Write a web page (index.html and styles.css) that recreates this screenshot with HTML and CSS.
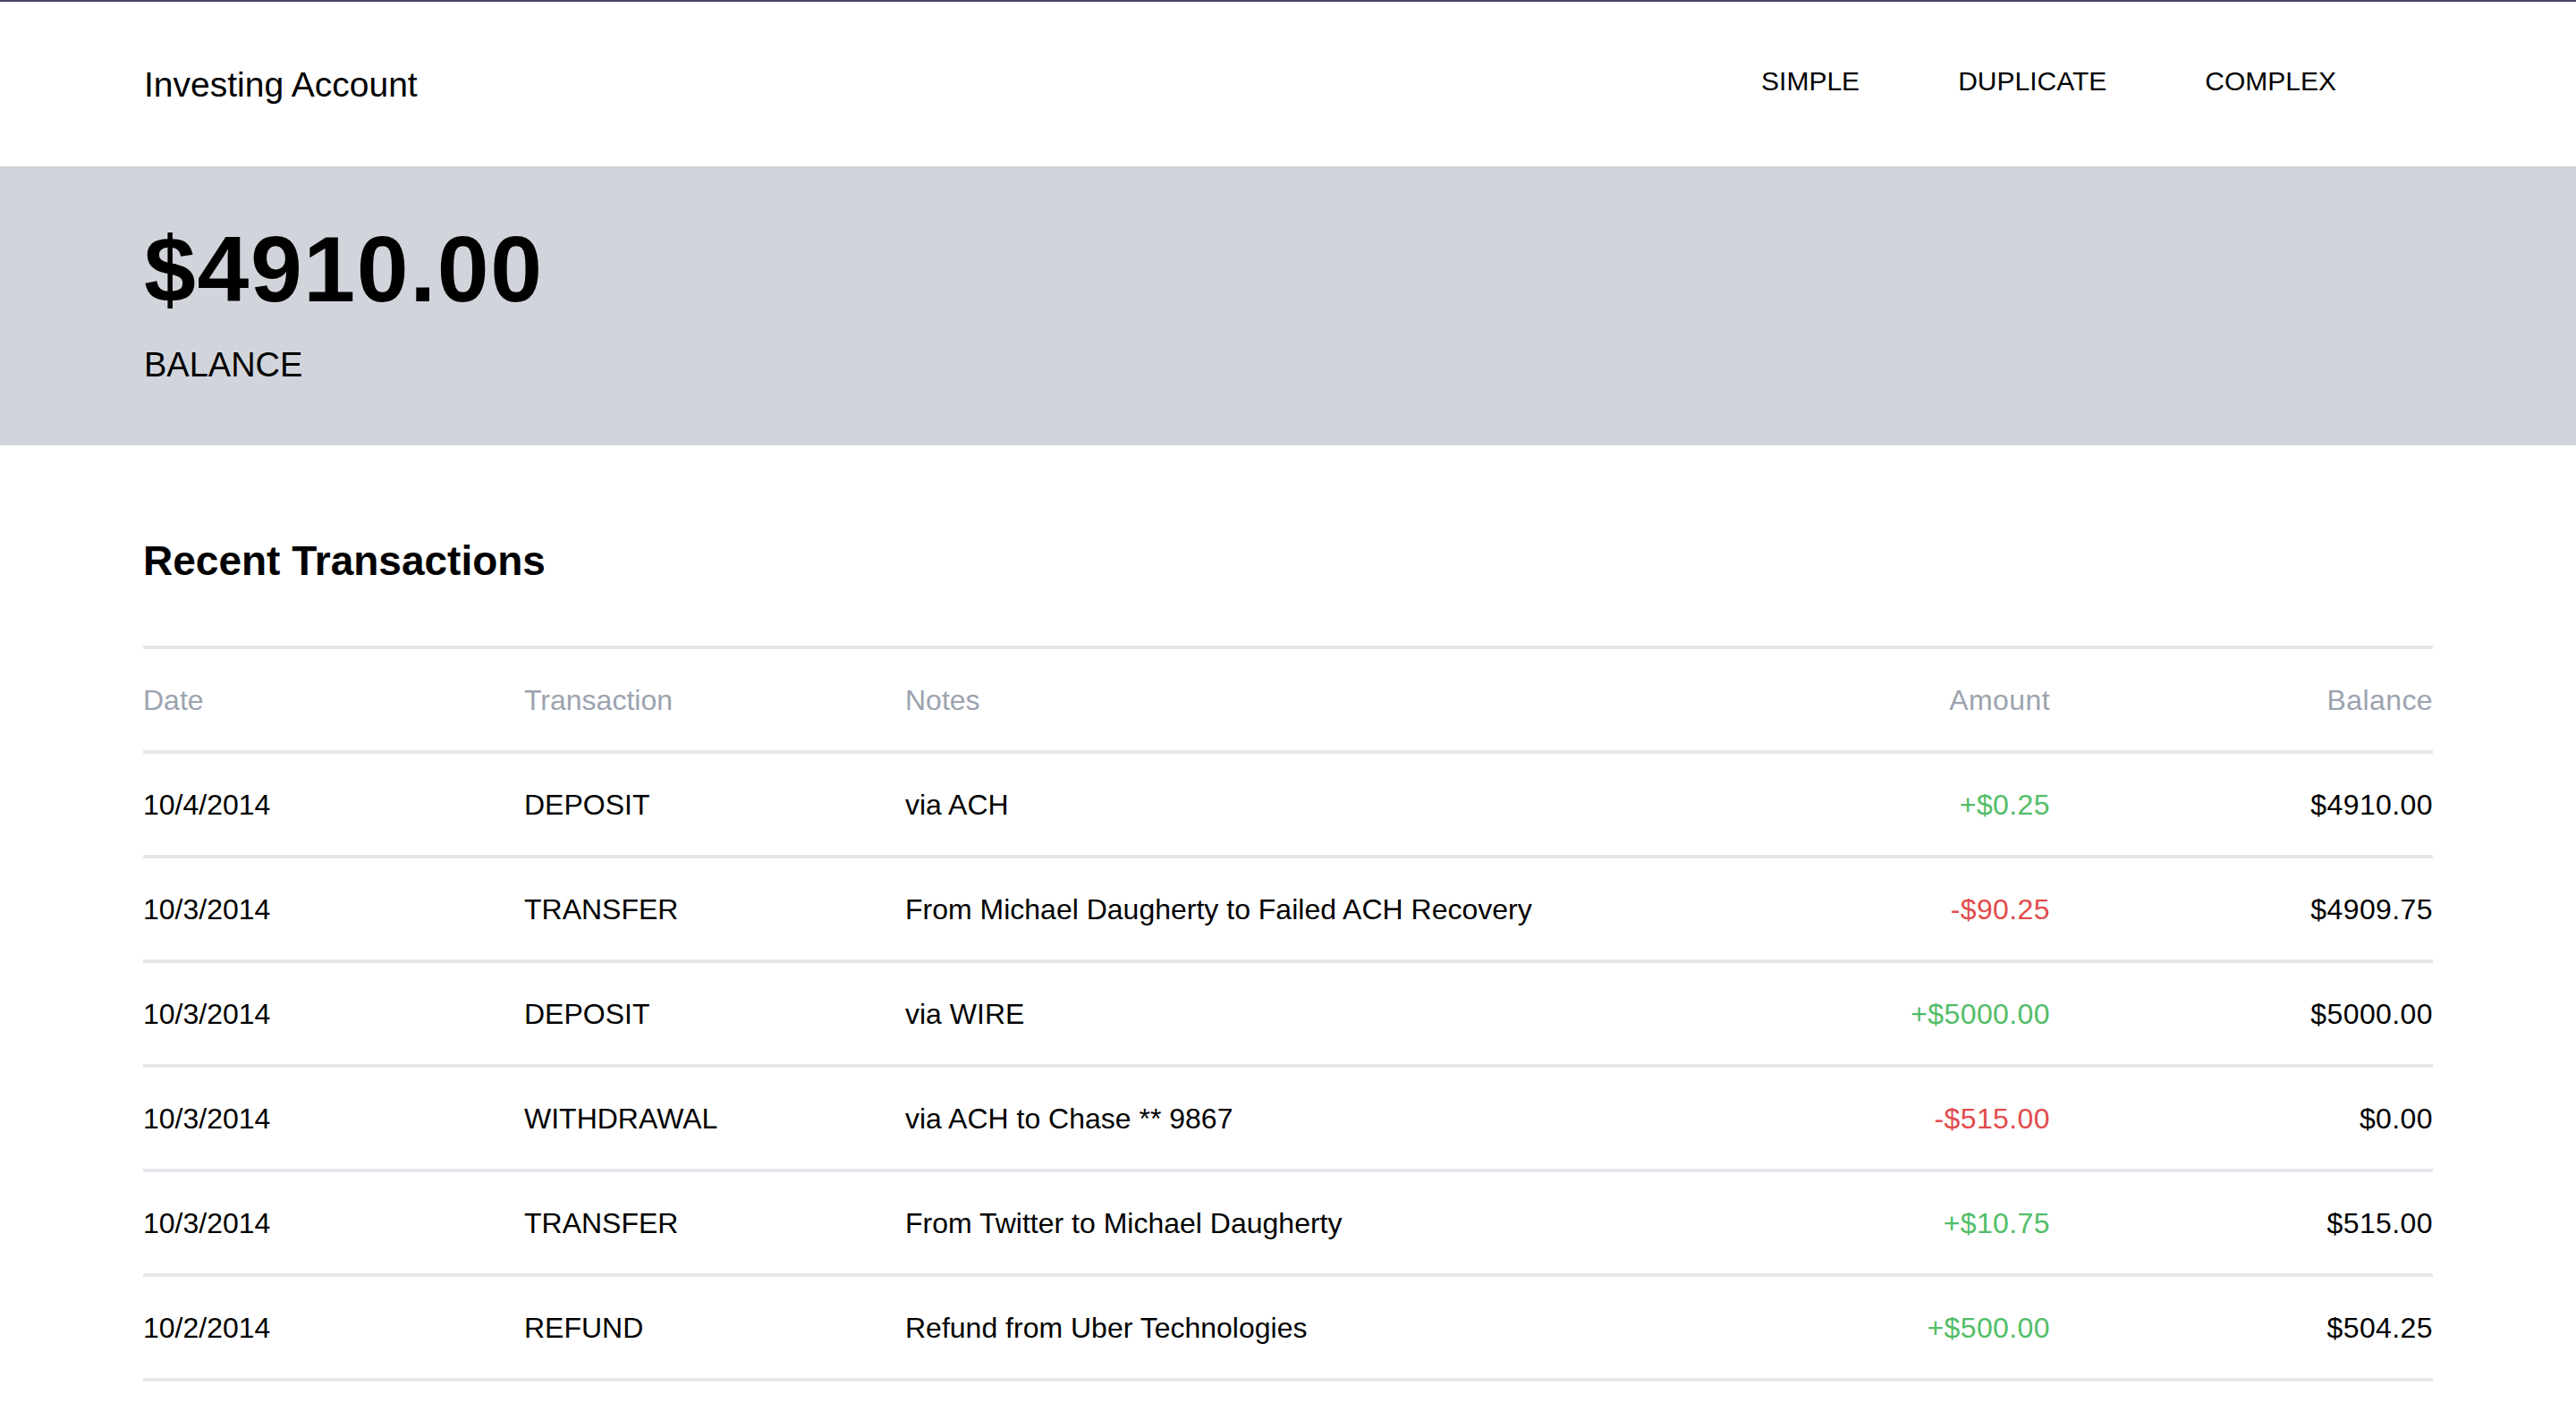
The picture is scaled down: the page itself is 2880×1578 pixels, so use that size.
FILE: index.html
```html
<!DOCTYPE html>
<html lang="en">
<head>
<meta charset="utf-8">
<title>Investing Account</title>
<link rel="stylesheet" href="styles.css">
</head>
<body>
<header class="topbar">
  <div class="brand">Investing Account</div>
  <nav class="nav">
    <a class="nav-link" href="#">SIMPLE</a>
    <a class="nav-link" href="#">DUPLICATE</a>
    <a class="nav-link" href="#">COMPLEX</a>
  </nav>
</header>
<section class="hero">
  <div class="hero-amount">$4910.00</div>
  <div class="hero-label">BALANCE</div>
</section>
<main class="content">
  <h2 class="section-title">Recent Transactions</h2>
  <table class="tx-table">
    <colgroup>
      <col class="c-date"><col class="c-type"><col class="c-notes"><col class="c-amount"><col class="c-balance">
    </colgroup>
    <thead>
      <tr>
        <th>Date</th><th>Transaction</th><th>Notes</th><th class="num">Amount</th><th class="num">Balance</th>
      </tr>
    </thead>
    <tbody>
      <tr><td>10/4/2014</td><td>DEPOSIT</td><td>via ACH</td><td class="num pos">+$0.25</td><td class="num">$4910.00</td></tr>
      <tr><td>10/3/2014</td><td>TRANSFER</td><td>From Michael Daugherty to Failed ACH Recovery</td><td class="num neg">-$90.25</td><td class="num">$4909.75</td></tr>
      <tr><td>10/3/2014</td><td>DEPOSIT</td><td>via WIRE</td><td class="num pos">+$5000.00</td><td class="num">$5000.00</td></tr>
      <tr><td>10/3/2014</td><td>WITHDRAWAL</td><td>via ACH to Chase ** 9867</td><td class="num neg">-$515.00</td><td class="num">$0.00</td></tr>
      <tr><td>10/3/2014</td><td>TRANSFER</td><td>From Twitter to Michael Daugherty</td><td class="num pos">+$10.75</td><td class="num">$515.00</td></tr>
      <tr><td>10/2/2014</td><td>REFUND</td><td>Refund from Uber Technologies</td><td class="num pos">+$500.00</td><td class="num">$504.25</td></tr>
    </tbody>
  </table>
</main>
</body>
</html>
```

FILE: styles.css
```css
* { box-sizing: border-box; }

html, body {
  margin: 0;
  padding: 0;
  background: #ffffff;
  color: #000000;
  font-family: "Liberation Sans", Arial, sans-serif;
}

.topbar {
  height: 186px;
  border-top: 2px solid #4b4570;
  display: flex;
  align-items: center;
  justify-content: space-between;
  padding: 0 160px 0 161px;
}

.brand {
  font-size: 39px;
  line-height: 1;
  margin-top: 1px;
}

.nav {
  display: flex;
  gap: 110px;
  margin-right: 108px;
  margin-bottom: 6px;
}

.nav-link {
  font-size: 30px;
  line-height: 1;
  color: #000000;
  text-decoration: none;
}

.hero {
  background: #d1d5db;
  height: 312px;
  padding: 63px 160px 0 161px;
}

.hero-amount {
  font-size: 104px;
  font-weight: 700;
  line-height: 1;
  letter-spacing: 1.6px;
}

.hero-label {
  margin-top: 36px;
  font-size: 38px;
  line-height: 1;
}

.content {
  padding: 106px 160px 0 160px;
}

.section-title {
  margin: 0 0 72px 0;
  font-size: 46px;
  font-weight: 700;
  line-height: 1;
}

.tx-table {
  width: 2560px;
  table-layout: fixed;
  border-collapse: separate;
  border-spacing: 0;
  border-top: 4px solid #e5e7eb;
}

.c-date { width: 426px; }
.c-type { width: 426px; }
.c-notes { width: 852px; }
.c-amount { width: 428px; }
.c-balance { width: 428px; }

.tx-table th,
.tx-table td {
  padding: 39px 0 38px 0;
  font-size: 32px;
  line-height: 36px;
  text-align: left;
  font-weight: 400;
  border-bottom: 4px solid #e5e7eb;
  white-space: nowrap;
}

.tx-table th {
  color: #9ca3af;
}

.tx-table .num { text-align: right; letter-spacing: 0.4px; }
.tx-table .pos { color: #52bd68; }
.tx-table .neg { color: #e24c4c; }
```
